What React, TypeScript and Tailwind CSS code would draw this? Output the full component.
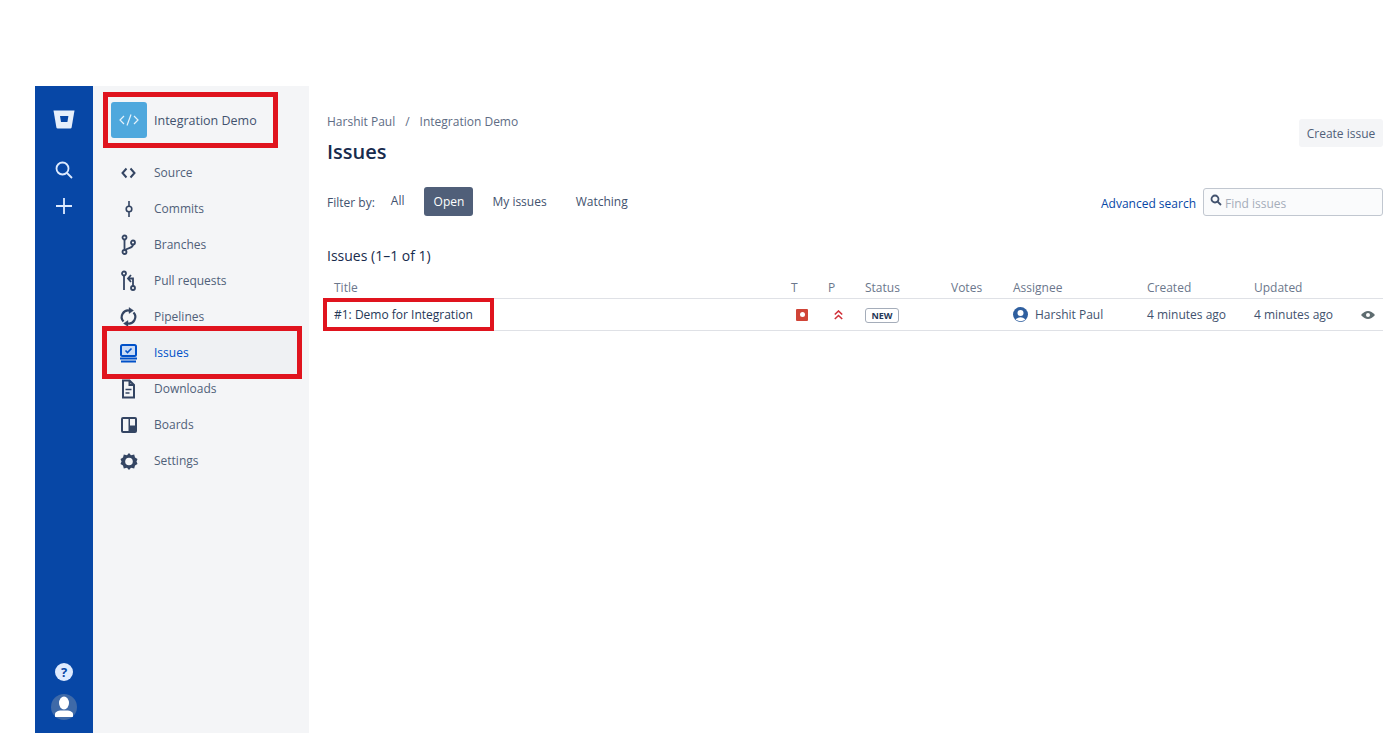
import React from 'react';

const font = "[font-family:'Open_Sans','Noto_Sans',sans-serif]";

const BucketLogo = () => (
  <svg width="22" height="19" viewBox="0 0 22 19">
    <path d="M0.5 0.5 H21.5 L18.6 17.4 Q18.4 18.5 17.3 18.5 H4.7 Q3.6 18.5 3.4 17.4 Z" fill="#e6effb" />
    <path d="M7 6 H15.4 L14.4 12 H8 Z" fill="#0747a6" />
  </svg>
);

const icons: Record<string, React.ReactNode> = {
  source: (
    <path d="M9.5 6.5 L5.5 11 L9.5 15.5 M13.5 6.5 L17.5 11 L13.5 15.5" fill="none" stroke="#344563" strokeWidth="2" />
  ),
  commits: (
    <g fill="none" stroke="#344563" strokeWidth="1.6">
      <circle cx="12" cy="11" r="2.8" />
      <path d="M12 3 V8 M12 14 V19" />
    </g>
  ),
  branches: (
    <g fill="none" stroke="#344563" strokeWidth="1.8">
      <circle cx="7.5" cy="3.5" r="2" />
      <circle cx="7.5" cy="18" r="2" />
      <circle cx="16" cy="8.5" r="2" />
      <path d="M7.5 5.5 V16 M16 10.5 C16 14.5 11 13.5 8.5 16" />
    </g>
  ),
  pulls: (
    <g fill="none" stroke="#344563" strokeWidth="1.8">
      <circle cx="7" cy="3.5" r="2" />
      <circle cx="16" cy="18" r="2" />
      <path d="M7 5.5 V20 M16 16 V8.5 H12 M14 5 L11 8.5 L14 12" />
    </g>
  ),
  pipelines: (
    <g fill="none" stroke="#344563" strokeWidth="2.2">
      <path d="M6.5 15.5 A6.5 6.5 0 0 1 13 4.8 M16.5 6.5 A6.5 6.5 0 0 1 10 17.2" />
      <path d="M12 1.5 L16.5 4.5 L12 7.5 Z M11 20.5 L6.5 17.5 L11 14.5 Z" fill="#344563" strokeWidth="0.4" />
    </g>
  ),
  issues: (
    <g>
      <rect x="4" y="3" width="15" height="11" rx="1.5" fill="#cfe0fa" stroke="#0052cc" strokeWidth="2" />
      <path d="M8.5 8.5 L10.5 10.5 L14.5 6.5" fill="none" stroke="#0052cc" strokeWidth="1.6" />
      <path d="M3 16.5 H20 M4 19.5 H19" stroke="#0052cc" strokeWidth="1.8" />
    </g>
  ),
  downloads: (
    <g fill="none" stroke="#344563" strokeWidth="2">
      <path d="M6 2.5 H12.5 L17 7 V19.5 H6 Z M12.5 2.5 V7 H17" />
      <path d="M8.5 11.5 H14.5 M8.5 15 H12.5" strokeWidth="1.5" />
    </g>
  ),
  boards: (
    <g>
      <rect x="4" y="3" width="16" height="16" rx="2" fill="#344563" />
      <rect x="6" y="5" width="5.5" height="12" fill="#f4f5f7" />
      <rect x="13" y="5" width="5" height="6.5" fill="#f4f5f7" />
    </g>
  ),
  settings: (
    <g>
      <path
        d="M12 3 L14 5.2 L17.2 4.6 L18 7.6 L20.5 9 L19.5 11.5 L20.5 14 L18 15.4 L17.2 18.4 L14 17.8 L12 20 L10 17.8 L6.8 18.4 L6 15.4 L3.5 14 L4.5 11.5 L3.5 9 L6 7.6 L6.8 4.6 L10 5.2 Z"
        fill="#344563"
      />
      <circle cx="12" cy="11.5" r="3.8" fill="#f4f5f7" />
    </g>
  ),
};

const navItems = [
  { key: 'source', label: 'Source' },
  { key: 'commits', label: 'Commits' },
  { key: 'branches', label: 'Branches' },
  { key: 'pulls', label: 'Pull requests' },
  { key: 'pipelines', label: 'Pipelines' },
  { key: 'issues', label: 'Issues', active: true },
  { key: 'downloads', label: 'Downloads' },
  { key: 'boards', label: 'Boards' },
  { key: 'settings', label: 'Settings' },
];

const gridCols = 'grid grid-cols-[464px_37px_37px_86px_62px_134px_107px_1fr] items-center';

export default function App() {
  return (
    <div className={`${font} flex h-[733px] w-[1400px] overflow-hidden bg-white pl-[35px] pt-[86px] text-[12px] text-[#505f79]`}>
      {/* global rail */}
      <div className="flex w-[58px] flex-col items-center bg-[#0747a6] pb-[13px] pt-[24px]">
        <BucketLogo />
        <svg className="mt-[31px]" width="20" height="20" viewBox="0 0 20 20" fill="none" stroke="#deebff" strokeWidth="1.8">
          <circle cx="8.5" cy="8.5" r="6" />
          <path d="M13 13 L18 18" />
        </svg>
        <svg className="mt-[16px]" width="20" height="20" viewBox="0 0 20 20" fill="none" stroke="#deebff" strokeWidth="1.8">
          <path d="M10 2 V18 M2 10 H18" />
        </svg>
        <div className="mt-auto flex h-[18px] w-[18px] items-center justify-center rounded-full bg-[#deebff] text-[13px] font-bold leading-none text-[#0747a6]">
          ?
        </div>
        <div className="mt-[13px] flex h-[26px] w-[26px] items-center justify-center overflow-hidden rounded-full bg-[#3f6aa8]">
          <svg width="20" height="22" viewBox="0 0 20 22" fill="#ffffff">
            <ellipse cx="10" cy="7" rx="5" ry="6.5" />
            <path d="M1 21 V18 Q1 15.5 6 14.5 H14 Q19 15.5 19 18 V21 Z" />
          </svg>
        </div>
      </div>

      {/* project sidebar */}
      <div className="flex w-[216px] flex-col bg-[#f4f5f7]">
        <div className="relative ml-[18px] mt-[16px] flex h-[36px] items-center gap-[7px]">
          <div className="flex h-[36px] w-[36px] items-center justify-center rounded-[3px] bg-[#4fa8dd]">
            <svg width="20" height="14" viewBox="0 0 20 14" fill="none" stroke="#e6f2fb" strokeWidth="1.2">
              <path d="M5 3 L1 7 L5 11 M15 3 L19 7 L15 11 M12 1.5 L8 12.5" />
            </svg>
          </div>
          <span className="pt-[3px] text-[12.5px] font-medium text-[#42526e]">Integration Demo</span>
          <div className="absolute left-[-8px] top-[-10px] h-[56px] w-[175px] border-[5px] border-[#e0141e]" />
        </div>
        <div className="mt-[17px] flex flex-col">
          {navItems.map(item => (
            <div key={item.key} className={`relative flex h-[36px] items-center pl-[24px] ${item.active ? 'text-[#0052cc]' : ''}`}>
              <svg width="22" height="22" viewBox="0 0 22 22">
                {icons[item.key]}
              </svg>
              <span className="ml-[15px]">{item.label}</span>
              {item.active && (
                <div className="absolute left-[9px] top-[-9px] h-[53px] w-[200px] border-[5px] border-[#e0141e] bg-[#091e42]/[0.02]" />
              )}
            </div>
          ))}
        </div>
      </div>

      {/* main content */}
      <div className="flex flex-1 flex-col pl-[18px] pr-[17px] pt-[27px]">
        <div className="flex items-start justify-between">
          <div>
            <div className="flex h-[18px] items-center text-[12px] text-[#5e6c84]">
              <span>Harshit Paul</span>
              <span className="mx-[10px]">/</span>
              <span>Integration Demo</span>
            </div>
            <h1 className="mt-[7px] text-[20px] font-semibold leading-[28px] text-[#172b4d]">Issues</h1>
          </div>
          <button className="mt-[6px] h-[28px] w-[84px] rounded-[3px] bg-[#f4f5f7] pt-[1px] text-[12px] text-[#505f79]">Create issue</button>
        </div>

        <div className="mt-[21px] flex h-[29px] items-center justify-between">
          <div className="flex items-center">
            <span className="pt-[3px] text-[12px] text-[#42526e]">Filter by:</span>
            <span className="ml-[16px] pb-[1px] text-[#42526e]">All</span>
            <span className="ml-[20px] flex h-[29px] w-[49px] items-center justify-center rounded-[3px] bg-[#505f79] text-white">Open</span>
            <span className="ml-[19px] text-[#42526e]">My issues</span>
            <span className="ml-[29px] text-[#42526e]">Watching</span>
          </div>
          <div className="flex items-center">
            <span className="pt-[5px] text-[#0747a6]">Advanced search</span>
            <div className="ml-[7px] flex h-[28px] w-[180px] items-center rounded-[3px] border border-[#c1c7d0] bg-[#fafbfc] pl-[6px]">
              <svg className="mb-[3px]" width="12" height="12" viewBox="0 0 12 12" fill="none" stroke="#42526e" strokeWidth="1.8">
                <circle cx="5" cy="5" r="3.5" />
                <path d="M7.5 7.5 L11 11" />
              </svg>
              <span className="ml-[3px] pt-[4px] text-[#a5adba]">Find issues</span>
            </div>
          </div>
        </div>

        <div className="mt-[31px] h-[18px] text-[14px] leading-[18px] text-[#172b4d]">Issues (1–1 of 1)</div>

        <div className={`${gridCols} mt-[12px] h-[22px] border-b border-[#dfe1e6] text-[12px] text-[#6b778c]`}>
          <span className="pl-[7px]">Title</span>
          <span>T</span>
          <span>P</span>
          <span>Status</span>
          <span>Votes</span>
          <span>Assignee</span>
          <span>Created</span>
          <span>Updated</span>
        </div>
        <div className={`${gridCols} relative h-[32px] border-b border-[#dfe1e6] text-[12px] text-[#42526e]`}>
          <span className="pl-[7px] text-[#253858]">#1: Demo for Integration</span>
          <span className="pl-[5px]">
            <span className="flex h-[12px] w-[12px] items-center justify-center rounded-[1px] bg-[#d04437]">
              <span className="h-[5px] w-[5px] rounded-full bg-white" />
            </span>
          </span>
          <span className="pl-[6px]">
            <svg className="block" width="9" height="10" viewBox="0 0 9 10" fill="none" stroke="#d0313a" strokeWidth="1.6">
              <path d="M0.8 4.5 L4.5 1 L8.2 4.5 M0.8 9 L4.5 5.5 L8.2 9" />
            </svg>
          </span>
          <span>
            <span className="inline-flex h-[15px] w-[34px] items-center justify-center rounded-[3px] border border-[#a5adba] text-[9px] font-bold text-[#253858]">NEW</span>
          </span>
          <span />
          <span className="flex items-center">
            <svg width="15" height="15" viewBox="0 0 15 15">
              <circle cx="7.5" cy="7.5" r="7.5" fill="#2f5f9f" />
              <circle cx="7.5" cy="6" r="3" fill="#ffffff" />
              <path d="M2.5 12.5 Q7.5 8 12.5 12.5 Q7.5 16 2.5 12.5 Z" fill="#ffffff" />
            </svg>
            <span className="ml-[7px]">Harshit Paul</span>
          </span>
          <span>4 minutes ago</span>
          <span>4 minutes ago</span>
          <span className="absolute left-[1034px]">
            <svg className="block" width="14" height="10" viewBox="0 0 14 10">
              <path d="M0 5 Q7 -3 14 5 Q7 13 0 5 Z" fill="#5e6c70" />
              <circle cx="7" cy="5" r="2" fill="#ffffff" />
            </svg>
          </span>
          <div className="absolute left-[-4px] top-[-1px] h-[33px] w-[171px] border-[4px] border-[#e0141e]" />
        </div>
      </div>
    </div>
  );
}
